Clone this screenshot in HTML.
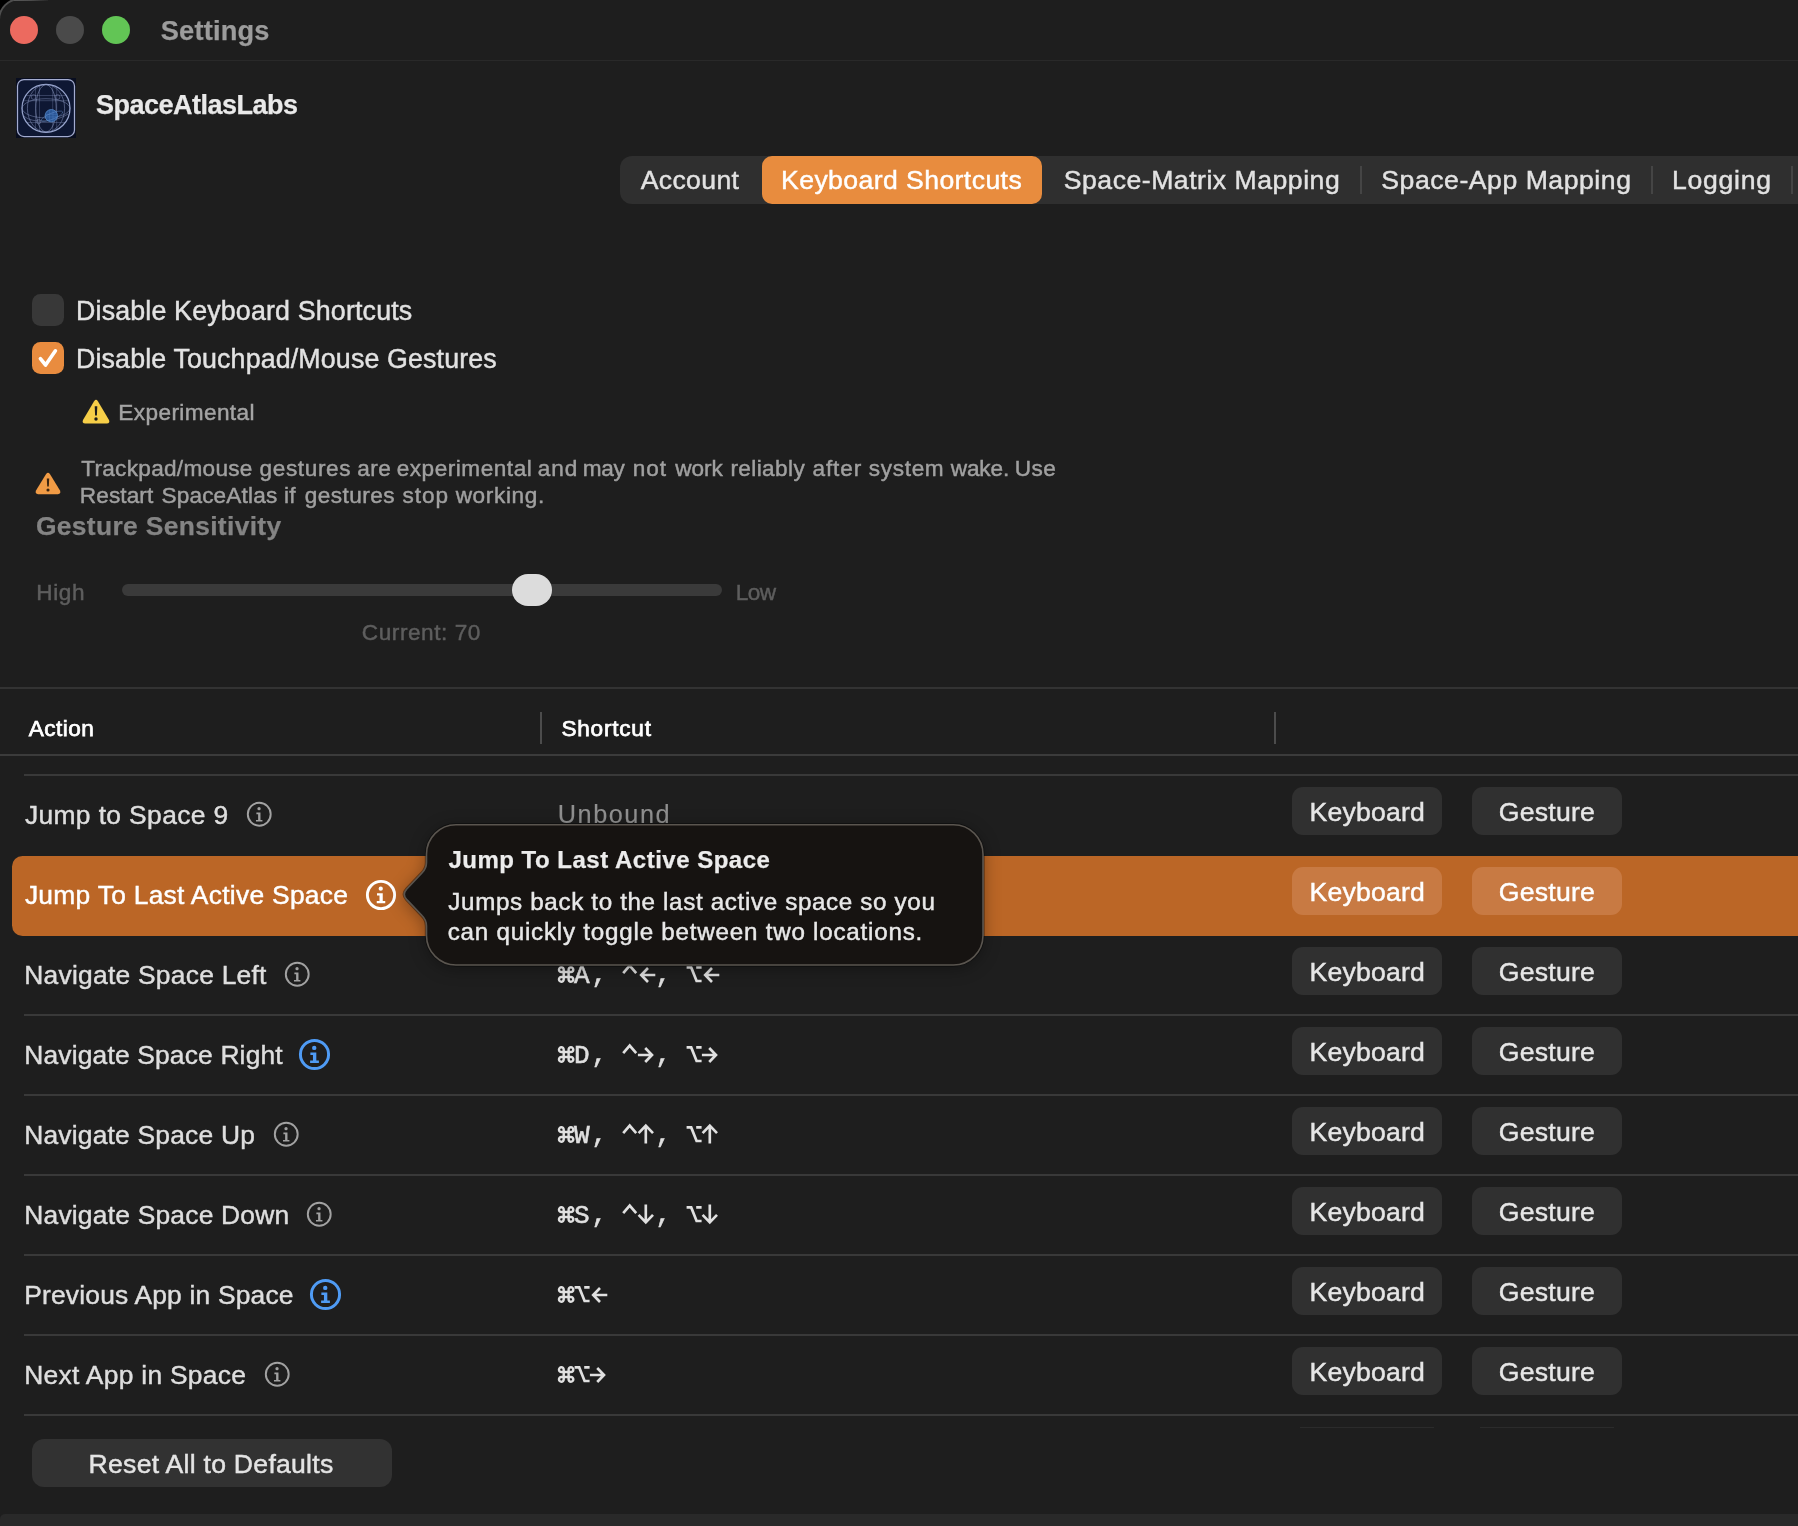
<!DOCTYPE html>
<html lang="en">
<head>
<meta charset="utf-8">
<title>Settings</title>
<style>
html,body{margin:0;padding:0;}
body{width:1798px;height:1526px;overflow:hidden;background:#000;position:relative;font-family:"Liberation Sans",sans-serif;}
.abs,.t,.ln,.btn,.cell,.ic{position:absolute;}
.t{white-space:nowrap;margin:0;padding:0;-webkit-text-stroke:0.45px currentColor;}
#win{position:absolute;left:-2.5px;top:-1.7px;width:1830px;height:1560px;background:#1e1e1e;border:2px solid #4e4e4e;border-radius:22px 0 0 0;box-sizing:border-box;}
.ln{background:#393939;height:2px;}
.btn{background:#303030;border-radius:11px;width:150px;height:48px;}
.btn.sel{background:#c87a43;}
#root{position:absolute;left:0;top:0;width:1798px;height:1526px;overflow:hidden;will-change:transform;}
.mono{font-family:"Liberation Mono",monospace;}
svg{position:absolute;overflow:visible;}
</style>
</head>
<body>
<svg width="0" height="0" style="position:absolute">
<defs>
<symbol id="cmd" viewBox="0 0 16 17" overflow="visible"><path d="M5.7,6 H3.4 A2.35 2.35 0 1 1 5.7 3.65 V13.35 A2.35 2.35 0 1 1 3.4 11 H12.9 A2.35 2.35 0 1 1 10.6 13.35 V3.65 A2.35 2.35 0 1 1 12.9 6 Z" fill="none" stroke="currentColor" stroke-width="2.45" stroke-linejoin="round"/></symbol>
<symbol id="opt" viewBox="0 0 16 17" overflow="visible"><path d="M0.6,1.4 H5.2 L10.6,15 H15.6 M10.2,1.4 H15.6" fill="none" stroke="currentColor" stroke-width="2.7" stroke-linejoin="miter"/></symbol>
<symbol id="ctl" viewBox="0 0 16 17" overflow="visible"><path d="M2.2,9.2 L8.7,1.6 L15.2,9.2" fill="none" stroke="currentColor" stroke-width="2.65" stroke-linejoin="miter" stroke-linecap="butt"/></symbol>
<symbol id="ar" viewBox="0 0 16 17" overflow="visible"><path d="M0.9,9 H14 M8.2,2 L15,9 L8.2,16" fill="none" stroke="currentColor" stroke-width="2.65" stroke-linejoin="miter" stroke-linecap="butt"/></symbol>
<symbol id="al" viewBox="0 0 16 17" overflow="visible"><path d="M15.3,9 H2.2 M8,2 L1.2,9 L8,16" fill="none" stroke="currentColor" stroke-width="2.65" stroke-linejoin="miter" stroke-linecap="butt"/></symbol>
<symbol id="au" viewBox="0 0 16 20" overflow="visible"><path d="M8.8,19.5 V1.8 M1.6,9.2 L8.8,1.6 L16,9.2" fill="none" stroke="currentColor" stroke-width="2.65" stroke-linejoin="miter" stroke-linecap="butt"/></symbol>
<symbol id="ad" viewBox="0 0 16 20" overflow="visible"><path d="M8.8,0.5 V18.2 M1.6,10.8 L8.8,18.4 L16,10.8" fill="none" stroke="currentColor" stroke-width="2.65" stroke-linejoin="miter" stroke-linecap="butt"/></symbol>
<symbol id="info" viewBox="0 0 24 24" overflow="visible"><circle cx="12" cy="12" r="11.2" fill="none" stroke="currentColor" stroke-width="1.9"/><circle cx="11.8" cy="6.5" r="1.6" fill="currentColor"/><path d="M9.2,10.4 H13.2 V17.6 H15.1 V19.2 H8.8 V17.6 H10.9 V12 H9.2 Z" fill="currentColor"/></symbol>
<symbol id="infob" viewBox="0 0 24 24" overflow="visible"><circle cx="12" cy="12" r="10.9" fill="none" stroke="currentColor" stroke-width="2.3"/><circle cx="11.8" cy="6.9" r="1.7" fill="currentColor"/><path d="M8.8,10.5 H13.4 V16.7 H15.4 V18.6 H8.6 V16.7 H10.8 V12.3 H8.8 Z" fill="currentColor"/></symbol>
</defs>
</svg>
<div id="root">
<div id="win"></div>

<!-- title bar -->
<div class="abs" style="left:14px;top:0;width:34px;height:1px;background:linear-gradient(90deg,#585858 0,#4c4c4c 50%,#262626 100%)"></div><!-- top highlight -->
<div class="abs" style="left:0;top:60px;width:1798px;height:1px;background:#292929"></div>
<div class="abs" style="left:10px;top:16px;width:28px;height:28px;border-radius:50%;background:#ec6a5f"></div>
<div class="abs" style="left:56px;top:16px;width:28px;height:28px;border-radius:50%;background:#4a4a4a"></div>
<div class="abs" style="left:102px;top:16px;width:28px;height:28px;border-radius:50%;background:#62c555"></div>
<!-- app icon -->
<svg style="left:16px;top:78px" width="60" height="60" viewBox="0 0 60 60">
<rect x="0" y="0" width="60" height="60" fill="#090e20"/>
<rect x="1.5" y="1.5" width="57" height="57" rx="6.5" fill="#0e1733" stroke="#a4acd0" stroke-width="1.25"/>
<g fill="none" stroke="#8f9cc6" stroke-width="0.9">
<circle cx="30" cy="30.3" r="24" stroke="#97a4cc" stroke-width="1.25"/>
<ellipse cx="30" cy="30.3" rx="10.2" ry="23.6" opacity="0.6"/>
<ellipse cx="30" cy="30.3" rx="18.6" ry="23.8" opacity="0.55"/>
<ellipse cx="30" cy="30.3" rx="23.8" ry="9.6" opacity="0.5"/>
<path d="M10,17.5 H50 M7.6,22.7 H52.4 M11,44.5 H49" opacity="0.35"/>
<path d="M19.5,9 V51.6 M23.5,7.5 V53 M36.7,7.5 V53 M40.7,9 V51.6" opacity="0.32"/>
<path d="M8,38 C16,46 40,44 52,36" opacity="0.5"/>
<circle cx="17.6" cy="19" r="2.4" opacity="0.45"/><circle cx="41.6" cy="19" r="2.4" opacity="0.45"/><circle cx="22.6" cy="43.6" r="2.2" opacity="0.45"/>
</g>
<circle cx="35.3" cy="37.7" r="6.2" fill="#2c5a9c" stroke="#5b8fd0" stroke-width="0.8" opacity="0.95"/>
<path d="M29.4,36.4 H41.2 M29.2,38.8 H41.4 M33.4,31.8 V43.6 M37,31.8 V43.6" stroke="#4f82c4" stroke-width="0.5" opacity="0.7" fill="none"/>
<ellipse cx="36" cy="38.2" rx="11.5" ry="3" fill="none" stroke="#6d9ad6" stroke-width="0.7" opacity="0.55" transform="rotate(-22 36 38.2)"/>
</svg>
<!-- tabs -->
<div class="abs" style="left:620px;top:156px;width:1200px;height:48px;border-radius:12px;background:#2f2f2f"></div>
<div class="abs" style="left:762px;top:156px;width:279.5px;height:48px;border-radius:10px;background:#e88c3e"></div>
<div class="abs" style="left:1359.5px;top:166px;width:2px;height:28px;background:#454545"></div>
<div class="abs" style="left:1650.5px;top:166px;width:2px;height:28px;background:#454545"></div>
<div class="abs" style="left:1790.5px;top:166px;width:2px;height:28px;background:#454545"></div>
<!-- checkboxes -->
<div class="abs" style="left:32px;top:294px;width:32px;height:32px;border-radius:8.5px;background:#383838"></div>
<div class="abs" style="left:32px;top:342px;width:32px;height:32px;border-radius:8.5px;background:#e98c3f"></div>
<svg style="left:32px;top:342px" width="32" height="32" viewBox="0 0 32 32"><path d="M8.4,16.6 L13.6,23 L23.4,8.8" fill="none" stroke="#fff" stroke-width="3.6" stroke-linecap="round" stroke-linejoin="round"/></svg>
<!-- warning icons -->
<svg style="left:82px;top:399px" width="28" height="25" viewBox="0 0 28 25"><path d="M12.1,2.2 Q14,-0.6 15.9,2.2 L27,21 Q28.3,24.4 24.8,24.6 H3.2 Q-0.3,24.4 1,21 Z" fill="#f6ce48"/><path d="M12.7,7.2 H15.3 L14.9,16.4 H13.1 Z" fill="#1b1b1b"/><circle cx="14" cy="20" r="1.7" fill="#1b1b1b"/></svg>
<svg style="left:34.5px;top:472px" width="26" height="22.5" viewBox="0 0 26 22.5"><path d="M11.1,2 Q13,-0.7 14.9,2 L25,18.6 Q26.3,22 22.9,22.2 H3.1 Q-0.3,22 1,18.6 Z" fill="#f19b45"/><path d="M11.8,6.4 H14.2 L13.8,14.6 H12.2 Z" fill="#3a2410"/><circle cx="13" cy="18" r="1.55" fill="#3a2410"/></svg>
<!-- slider -->
<div class="abs" style="left:122px;top:584px;width:600px;height:12px;border-radius:6px;background:#3a3a3a"></div>
<div class="abs" style="left:512px;top:574px;width:40px;height:32px;border-radius:16px;background:#dcdcdc"></div>
<!-- table lines -->
<div class="ln" style="left:0;top:687px;width:1798px;background:#333333"></div>
<div class="ln" style="left:0;top:754px;width:1798px;background:#3b3b3b"></div>
<div class="abs" style="left:540px;top:712px;width:2px;height:32px;background:#4c4c4c"></div>
<div class="abs" style="left:1274px;top:712px;width:2px;height:32px;background:#4c4c4c"></div>

<div class="ln" style="left:24px;top:774px;width:1780px"></div>
<div class="ln" style="left:24px;top:1014px;width:1780px"></div>
<div class="ln" style="left:24px;top:1094px;width:1780px"></div>
<div class="ln" style="left:24px;top:1174px;width:1780px"></div>
<div class="ln" style="left:24px;top:1254px;width:1780px"></div>
<div class="ln" style="left:24px;top:1334px;width:1780px"></div>
<div class="ln" style="left:24px;top:1414px;width:1780px"></div>
<div class="abs" style="left:12px;top:856px;width:1800px;height:80px;border-radius:10.5px 0 0 10.5px;background:#bb6626"></div>
<div class="btn" style="left:1292px;top:787px"></div><div class="btn" style="left:1472px;top:787px"></div>
<div class="btn sel" style="left:1292px;top:867px"></div><div class="btn sel" style="left:1472px;top:867px"></div>
<div class="btn" style="left:1292px;top:947px"></div><div class="btn" style="left:1472px;top:947px"></div>
<div class="btn" style="left:1292px;top:1027px"></div><div class="btn" style="left:1472px;top:1027px"></div>
<div class="btn" style="left:1292px;top:1107px"></div><div class="btn" style="left:1472px;top:1107px"></div>
<div class="btn" style="left:1292px;top:1187px"></div><div class="btn" style="left:1472px;top:1187px"></div>
<div class="btn" style="left:1292px;top:1267px"></div><div class="btn" style="left:1472px;top:1267px"></div>
<div class="btn" style="left:1292px;top:1347px"></div><div class="btn" style="left:1472px;top:1347px"></div>
<div class="abs" style="left:1300px;top:1427px;width:134px;height:1px;background:#2b2b2b"></div><div class="abs" style="left:1480px;top:1427px;width:134px;height:1px;background:#2b2b2b"></div>
<div class="abs" style="left:32px;top:1439px;width:360px;height:48px;border-radius:12px;background:#323232"></div>
<svg style="left:246.75px;top:801.75px;color:#a2a2a2" width="24.5" height="24.5" viewBox="0 0 24 24"><use href="#info"/></svg>
<svg style="left:366.00px;top:879.50px;color:#ffffff" width="30" height="30" viewBox="0 0 24 24"><use href="#infob"/></svg>
<svg style="left:285.45px;top:961.75px;color:#a2a2a2" width="24.5" height="24.5" viewBox="0 0 24 24"><use href="#info"/></svg>
<svg style="left:298.75px;top:1039.00px;color:#4f9bf4" width="31" height="31" viewBox="0 0 24 24"><use href="#infob"/></svg>
<svg style="left:273.55px;top:1121.95px;color:#a2a2a2" width="24.5" height="24.5" viewBox="0 0 24 24"><use href="#info"/></svg>
<svg style="left:306.55px;top:1201.95px;color:#a2a2a2" width="24.5" height="24.5" viewBox="0 0 24 24"><use href="#info"/></svg>
<svg style="left:310.30px;top:1279.00px;color:#4f9bf4" width="31" height="31" viewBox="0 0 24 24"><use href="#infob"/></svg>
<svg style="left:265.35px;top:1361.95px;color:#a2a2a2" width="24.5" height="24.5" viewBox="0 0 24 24"><use href="#info"/></svg>
<svg style="left:557.60px;top:966.35px;color:#e0e0e0" width="16" height="17" viewBox="0 0 16 17"><use href="#cmd"/></svg><span class="t mono" style="left:574.00px;top:961px;font-size:26.0px;line-height:30px;color:#e0e0e0;-webkit-text-stroke:0.55px #e0e0e0">A</span><span class="t mono" style="left:591.40px;top:960px;font-size:26.0px;line-height:30px;color:#e0e0e0;-webkit-text-stroke:0.55px #e0e0e0">,</span><svg style="left:620.80px;top:964.40px;color:#e0e0e0" width="16" height="17" viewBox="0 0 16 17"><use href="#ctl"/></svg><svg style="left:639.50px;top:965.80px;color:#e0e0e0" width="16" height="17" viewBox="0 0 16 17"><use href="#al"/></svg><span class="t mono" style="left:655.40px;top:960px;font-size:26.0px;line-height:30px;color:#e0e0e0;-webkit-text-stroke:0.55px #e0e0e0">,</span><svg style="left:685.60px;top:966.35px;color:#e0e0e0" width="16" height="17" viewBox="0 0 16 17"><use href="#opt"/></svg><svg style="left:703.50px;top:965.80px;color:#e0e0e0" width="16" height="17" viewBox="0 0 16 17"><use href="#al"/></svg>
<svg style="left:557.60px;top:1046.35px;color:#e0e0e0" width="16" height="17" viewBox="0 0 16 17"><use href="#cmd"/></svg><span class="t mono" style="left:574.00px;top:1041px;font-size:26.0px;line-height:30px;color:#e0e0e0;-webkit-text-stroke:0.55px #e0e0e0">D</span><span class="t mono" style="left:591.40px;top:1040px;font-size:26.0px;line-height:30px;color:#e0e0e0;-webkit-text-stroke:0.55px #e0e0e0">,</span><svg style="left:620.80px;top:1044.40px;color:#e0e0e0" width="16" height="17" viewBox="0 0 16 17"><use href="#ctl"/></svg><svg style="left:636.50px;top:1045.80px;color:#e0e0e0" width="16" height="17" viewBox="0 0 16 17"><use href="#ar"/></svg><span class="t mono" style="left:655.40px;top:1040px;font-size:26.0px;line-height:30px;color:#e0e0e0;-webkit-text-stroke:0.55px #e0e0e0">,</span><svg style="left:685.60px;top:1046.35px;color:#e0e0e0" width="16" height="17" viewBox="0 0 16 17"><use href="#opt"/></svg><svg style="left:700.50px;top:1045.80px;color:#e0e0e0" width="16" height="17" viewBox="0 0 16 17"><use href="#ar"/></svg>
<svg style="left:557.60px;top:1126.35px;color:#e0e0e0" width="16" height="17" viewBox="0 0 16 17"><use href="#cmd"/></svg><span class="t mono" style="left:574.00px;top:1121px;font-size:26.0px;line-height:30px;color:#e0e0e0;-webkit-text-stroke:0.55px #e0e0e0">W</span><span class="t mono" style="left:591.40px;top:1120px;font-size:26.0px;line-height:30px;color:#e0e0e0;-webkit-text-stroke:0.55px #e0e0e0">,</span><svg style="left:620.80px;top:1124.40px;color:#e0e0e0" width="16" height="17" viewBox="0 0 16 17"><use href="#ctl"/></svg><svg style="left:637.30px;top:1124.30px;color:#e0e0e0" width="16" height="20" viewBox="0 0 16 20"><use href="#au"/></svg><span class="t mono" style="left:655.40px;top:1120px;font-size:26.0px;line-height:30px;color:#e0e0e0;-webkit-text-stroke:0.55px #e0e0e0">,</span><svg style="left:685.60px;top:1126.35px;color:#e0e0e0" width="16" height="17" viewBox="0 0 16 17"><use href="#opt"/></svg><svg style="left:701.30px;top:1124.30px;color:#e0e0e0" width="16" height="20" viewBox="0 0 16 20"><use href="#au"/></svg>
<svg style="left:557.60px;top:1206.35px;color:#e0e0e0" width="16" height="17" viewBox="0 0 16 17"><use href="#cmd"/></svg><span class="t mono" style="left:574.00px;top:1201px;font-size:26.0px;line-height:30px;color:#e0e0e0;-webkit-text-stroke:0.55px #e0e0e0">S</span><span class="t mono" style="left:591.40px;top:1200px;font-size:26.0px;line-height:30px;color:#e0e0e0;-webkit-text-stroke:0.55px #e0e0e0">,</span><svg style="left:620.80px;top:1204.40px;color:#e0e0e0" width="16" height="17" viewBox="0 0 16 17"><use href="#ctl"/></svg><svg style="left:637.30px;top:1204.30px;color:#e0e0e0" width="16" height="20" viewBox="0 0 16 20"><use href="#ad"/></svg><span class="t mono" style="left:655.40px;top:1200px;font-size:26.0px;line-height:30px;color:#e0e0e0;-webkit-text-stroke:0.55px #e0e0e0">,</span><svg style="left:685.60px;top:1206.35px;color:#e0e0e0" width="16" height="17" viewBox="0 0 16 17"><use href="#opt"/></svg><svg style="left:701.30px;top:1204.30px;color:#e0e0e0" width="16" height="20" viewBox="0 0 16 20"><use href="#ad"/></svg>
<svg style="left:557.60px;top:1286.35px;color:#e0e0e0" width="16" height="17" viewBox="0 0 16 17"><use href="#cmd"/></svg><svg style="left:573.60px;top:1286.35px;color:#e0e0e0" width="16" height="17" viewBox="0 0 16 17"><use href="#opt"/></svg><svg style="left:591.50px;top:1285.80px;color:#e0e0e0" width="16" height="17" viewBox="0 0 16 17"><use href="#al"/></svg>
<svg style="left:557.60px;top:1366.35px;color:#e0e0e0" width="16" height="17" viewBox="0 0 16 17"><use href="#cmd"/></svg><svg style="left:573.60px;top:1366.35px;color:#e0e0e0" width="16" height="17" viewBox="0 0 16 17"><use href="#opt"/></svg><svg style="left:588.50px;top:1365.80px;color:#e0e0e0" width="16" height="17" viewBox="0 0 16 17"><use href="#ar"/></svg>
<svg style="left:0;top:0;z-index:20;filter:drop-shadow(0 3px 8px rgba(0,0,0,0.32))" width="1798" height="1526" viewBox="0 0 1798 1526"><path d="M456,824.8 H953.5 A29.5 29.5 0 0 1 983 854.3 V935.5 A29.5 29.5 0 0 1 953.5 965 H456 A29.5 29.5 0 0 1 426.5 935.5 V926 C426.5,921 425,918.5 422,915.5 L406.6,899.4 Q402,894.3 406.6,889.200 L422,873 C425,870 426.500,867.500 426.500,862.500 V854.300 A29.5 29.5 0 0 1 456 824.800 Z" fill="none" stroke="rgba(0,0,0,0.4)" stroke-width="3.4"/><path d="M456,824.8 H953.5 A29.5 29.5 0 0 1 983 854.3 V935.5 A29.5 29.5 0 0 1 953.5 965 H456 A29.5 29.5 0 0 1 426.5 935.5 V926 C426.5,921 425,918.5 422,915.5 L406.6,899.4 Q402,894.3 406.6,889.200 L422,873 C425,870 426.500,867.500 426.500,862.500 V854.300 A29.5 29.5 0 0 1 456 824.800 Z" fill="#161311" stroke="#5a554f" stroke-width="1.6"/></svg>
<span class="t" style="left:160.72px;top:15px;font-size:27.2px;line-height:31px;letter-spacing:0.207px;color:#9c9c9c;font-weight:700;-webkit-text-stroke:0.25px currentColor;">Settings</span>
<span class="t" style="left:96.02px;top:90px;font-size:27.0px;line-height:30px;letter-spacing:-0.500px;color:#e9e9e9;font-weight:700;-webkit-text-stroke:0.25px currentColor;">SpaceAtlasLabs</span>
<span class="t" style="left:640.70px;top:165px;font-size:26.6px;line-height:30px;letter-spacing:0.359px;color:#e2e2e2;">Account</span>
<span class="t" style="left:781.02px;top:165px;font-size:26.6px;line-height:30px;letter-spacing:0.419px;color:#ffffff;">Keyboard Shortcuts</span>
<span class="t" style="left:1063.79px;top:165px;font-size:26.6px;line-height:30px;letter-spacing:0.519px;color:#e2e2e2;">Space-Matrix Mapping</span>
<span class="t" style="left:1381.29px;top:165px;font-size:26.6px;line-height:30px;letter-spacing:0.543px;color:#e2e2e2;">Space-App Mapping</span>
<span class="t" style="left:1672.02px;top:165px;font-size:26.6px;line-height:30px;letter-spacing:0.716px;color:#e2e2e2;">Logging</span>
<span class="t" style="left:76.00px;top:296px;font-size:26.8px;line-height:30px;letter-spacing:0.162px;color:#e2e2e2;">Disable Keyboard Shortcuts</span>
<span class="t" style="left:76.00px;top:344px;font-size:26.8px;line-height:30px;letter-spacing:0.138px;color:#e2e2e2;">Disable Touchpad/Mouse Gestures</span>
<span class="t" style="left:118.35px;top:399px;font-size:22.6px;line-height:25px;letter-spacing:0.392px;color:#a4a4a4;transform:translateY(0.50px);">Experimental</span>
<span class="t" style="left:81.19px;top:455px;font-size:22.6px;line-height:25px;letter-spacing:0.291px;color:#a0a0a0;transform:translateY(0.60px);">Trackpad/mouse</span>
<span class="t" style="left:259.55px;top:455px;font-size:22.6px;line-height:25px;letter-spacing:0.615px;color:#a0a0a0;transform:translateY(0.60px);">gestures</span>
<span class="t" style="left:357.34px;top:455px;font-size:22.6px;line-height:25px;letter-spacing:0.355px;color:#a0a0a0;transform:translateY(0.60px);">are</span>
<span class="t" style="left:396.64px;top:455px;font-size:22.6px;line-height:25px;letter-spacing:0.529px;color:#a0a0a0;transform:translateY(0.60px);">experimental</span>
<span class="t" style="left:537.74px;top:455px;font-size:22.6px;line-height:25px;letter-spacing:0.960px;color:#a0a0a0;transform:translateY(0.60px);">and</span>
<span class="t" style="left:582.80px;top:455px;font-size:22.6px;line-height:25px;letter-spacing:-0.369px;color:#a0a0a0;transform:translateY(0.60px);">may</span>
<span class="t" style="left:632.80px;top:455px;font-size:22.6px;line-height:25px;letter-spacing:0.929px;color:#a0a0a0;transform:translateY(0.60px);">not</span>
<span class="t" style="left:675.13px;top:455px;font-size:22.6px;line-height:25px;letter-spacing:0.010px;color:#a0a0a0;transform:translateY(0.60px);">work</span>
<span class="t" style="left:730.40px;top:455px;font-size:22.6px;line-height:25px;letter-spacing:0.396px;color:#a0a0a0;transform:translateY(0.60px);">reliably</span>
<span class="t" style="left:812.44px;top:455px;font-size:22.6px;line-height:25px;letter-spacing:0.906px;color:#a0a0a0;transform:translateY(0.60px);">after</span>
<span class="t" style="left:868.77px;top:455px;font-size:22.6px;line-height:25px;letter-spacing:0.673px;color:#a0a0a0;transform:translateY(0.60px);">system</span>
<span class="t" style="left:950.73px;top:455px;font-size:22.6px;line-height:25px;letter-spacing:-0.123px;color:#a0a0a0;transform:translateY(0.60px);">wake.</span>
<span class="t" style="left:1014.86px;top:455px;font-size:22.6px;line-height:25px;letter-spacing:0.334px;color:#a0a0a0;transform:translateY(0.60px);">Use</span>
<span class="t" style="left:79.85px;top:483px;font-size:22.6px;line-height:25px;letter-spacing:0.083px;color:#a0a0a0;">Restart</span>
<span class="t" style="left:161.47px;top:483px;font-size:22.6px;line-height:25px;letter-spacing:0.161px;color:#a0a0a0;">SpaceAtlas</span>
<span class="t" style="left:284.09px;top:483px;font-size:22.6px;line-height:25px;letter-spacing:0.082px;color:#a0a0a0;">if</span>
<span class="t" style="left:304.65px;top:483px;font-size:22.6px;line-height:25px;letter-spacing:0.458px;color:#a0a0a0;">gestures</span>
<span class="t" style="left:402.57px;top:483px;font-size:22.6px;line-height:25px;letter-spacing:0.958px;color:#a0a0a0;">stop</span>
<span class="t" style="left:455.63px;top:483px;font-size:22.6px;line-height:25px;letter-spacing:0.643px;color:#a0a0a0;">working.</span>
<span class="t" style="left:35.92px;top:511px;font-size:26.4px;line-height:30px;letter-spacing:0.342px;color:#848484;font-weight:700;-webkit-text-stroke:0.25px currentColor;">Gesture Sensitivity</span>
<span class="t" style="left:36.25px;top:580px;font-size:22.6px;line-height:25px;letter-spacing:0.585px;color:#5e5e5e;">High</span>
<span class="t" style="left:735.65px;top:580px;font-size:22.6px;line-height:25px;letter-spacing:-0.449px;color:#5e5e5e;">Low</span>
<span class="t" style="left:361.85px;top:620px;font-size:22.6px;line-height:25px;letter-spacing:0.551px;color:#5e5e5e;">Current: 70</span>
<span class="t" style="left:28.71px;top:716px;font-size:22.6px;line-height:25px;letter-spacing:0.473px;color:#ffffff;-webkit-text-stroke:0.75px #ffffff;transform:translateY(-0.25px);">Action</span>
<span class="t" style="left:561.47px;top:716px;font-size:22.6px;line-height:25px;letter-spacing:0.757px;color:#ffffff;-webkit-text-stroke:0.75px #ffffff;transform:translateY(-0.25px);">Shortcut</span>
<span class="t" style="left:24.89px;top:799px;font-size:26.4px;line-height:30px;letter-spacing:0.380px;color:#dedede;transform:translateY(0.60px);">Jump to Space 9</span>
<span class="t" style="left:24.89px;top:880px;font-size:26.4px;line-height:30px;letter-spacing:0.280px;color:#ffffff;">Jump To Last Active Space</span>
<span class="t" style="left:24.23px;top:959px;font-size:26.4px;line-height:30px;letter-spacing:0.252px;color:#dedede;transform:translateY(0.60px);">Navigate Space Left</span>
<span class="t" style="left:24.23px;top:1039px;font-size:26.4px;line-height:30px;letter-spacing:0.168px;color:#dedede;transform:translateY(0.60px);">Navigate Space Right</span>
<span class="t" style="left:24.23px;top:1119px;font-size:26.4px;line-height:30px;letter-spacing:0.202px;color:#dedede;transform:translateY(0.60px);">Navigate Space Up</span>
<span class="t" style="left:24.23px;top:1199px;font-size:26.4px;line-height:30px;letter-spacing:0.214px;color:#dedede;transform:translateY(0.60px);">Navigate Space Down</span>
<span class="t" style="left:24.23px;top:1279px;font-size:26.4px;line-height:30px;letter-spacing:0.184px;color:#dedede;transform:translateY(0.60px);">Previous App in Space</span>
<span class="t" style="left:24.23px;top:1359px;font-size:26.4px;line-height:30px;letter-spacing:0.288px;color:#dedede;transform:translateY(0.60px);">Next App in Space</span>
<span class="t" style="left:557.75px;top:799px;font-size:25.3px;line-height:28px;letter-spacing:1.533px;color:#909090;-webkit-text-stroke:0.15px currentColor;transform:translateY(0.50px);">Unbound</span>
<span class="t" style="left:1309.62px;top:796px;font-size:26.6px;line-height:30px;letter-spacing:0.179px;color:#e6e6e6;transform:translateY(0.60px);">Keyboard</span>
<span class="t" style="left:1498.86px;top:796px;font-size:26.6px;line-height:30px;letter-spacing:0.220px;color:#e6e6e6;transform:translateY(0.60px);">Gesture</span>
<span class="t" style="left:1309.62px;top:876px;font-size:26.6px;line-height:30px;letter-spacing:0.179px;color:#ffffff;transform:translateY(0.60px);">Keyboard</span>
<span class="t" style="left:1498.86px;top:876px;font-size:26.6px;line-height:30px;letter-spacing:0.220px;color:#ffffff;transform:translateY(0.60px);">Gesture</span>
<span class="t" style="left:1309.62px;top:956px;font-size:26.6px;line-height:30px;letter-spacing:0.179px;color:#e6e6e6;transform:translateY(0.60px);">Keyboard</span>
<span class="t" style="left:1498.86px;top:956px;font-size:26.6px;line-height:30px;letter-spacing:0.220px;color:#e6e6e6;transform:translateY(0.60px);">Gesture</span>
<span class="t" style="left:1309.62px;top:1036px;font-size:26.6px;line-height:30px;letter-spacing:0.179px;color:#e6e6e6;transform:translateY(0.60px);">Keyboard</span>
<span class="t" style="left:1498.86px;top:1036px;font-size:26.6px;line-height:30px;letter-spacing:0.220px;color:#e6e6e6;transform:translateY(0.60px);">Gesture</span>
<span class="t" style="left:1309.62px;top:1116px;font-size:26.6px;line-height:30px;letter-spacing:0.179px;color:#e6e6e6;transform:translateY(0.60px);">Keyboard</span>
<span class="t" style="left:1498.86px;top:1116px;font-size:26.6px;line-height:30px;letter-spacing:0.220px;color:#e6e6e6;transform:translateY(0.60px);">Gesture</span>
<span class="t" style="left:1309.62px;top:1196px;font-size:26.6px;line-height:30px;letter-spacing:0.179px;color:#e6e6e6;transform:translateY(0.60px);">Keyboard</span>
<span class="t" style="left:1498.86px;top:1196px;font-size:26.6px;line-height:30px;letter-spacing:0.220px;color:#e6e6e6;transform:translateY(0.60px);">Gesture</span>
<span class="t" style="left:1309.62px;top:1276px;font-size:26.6px;line-height:30px;letter-spacing:0.179px;color:#e6e6e6;transform:translateY(0.60px);">Keyboard</span>
<span class="t" style="left:1498.86px;top:1276px;font-size:26.6px;line-height:30px;letter-spacing:0.220px;color:#e6e6e6;transform:translateY(0.60px);">Gesture</span>
<span class="t" style="left:1309.62px;top:1356px;font-size:26.6px;line-height:30px;letter-spacing:0.179px;color:#e6e6e6;transform:translateY(0.60px);">Keyboard</span>
<span class="t" style="left:1498.86px;top:1356px;font-size:26.6px;line-height:30px;letter-spacing:0.220px;color:#e6e6e6;transform:translateY(0.60px);">Gesture</span>
<span class="t" style="left:448.39px;top:845px;font-size:24.0px;line-height:27px;letter-spacing:0.505px;color:#ececec;font-weight:700;-webkit-text-stroke:0.25px currentColor;z-index:30;transform:translateY(0.50px);">Jump To Last Active Space</span>
<span class="t" style="left:448.37px;top:887px;font-size:24.2px;line-height:27px;letter-spacing:0.651px;color:#e8e8e8;z-index:30;transform:translateY(0.50px);">Jumps back to the last active space so you</span>
<span class="t" style="left:447.72px;top:917px;font-size:24.2px;line-height:27px;letter-spacing:0.770px;color:#e8e8e8;z-index:30;transform:translateY(0.50px);">can quickly toggle between two locations.</span>
<span class="t" style="left:88.62px;top:1448px;font-size:26.6px;line-height:30px;letter-spacing:0.258px;color:#e4e4e4;transform:translateY(0.50px);">Reset All to Defaults</span>
<div class="abs" style="left:0;top:1514px;width:1798px;height:12px;background:#292929;border-radius:5px 0 0 0;z-index:40"></div>
</div>
</body>
</html>
